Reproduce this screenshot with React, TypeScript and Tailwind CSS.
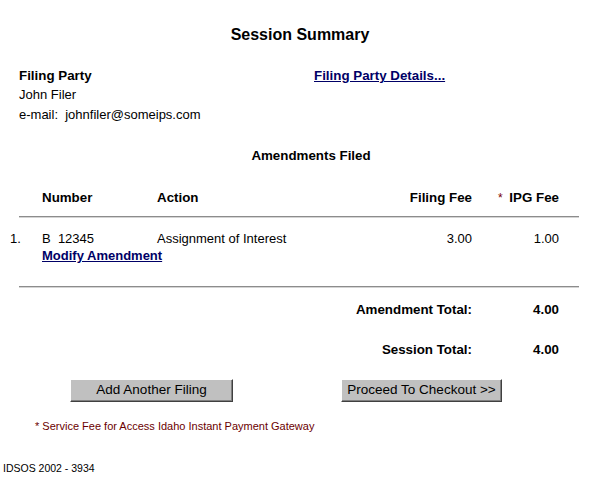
import React from "react";

const fees = [
  { no: "1.", number: "B  12345", action: "Assignment of Interest", filing: "3.00", ipg: "1.00" },
];

const Rule = () => (
  <div className="ml-[19px] mr-[21px] border-t border-b border-t-[#8c8c8c] border-b-[#d4d4d4]" />
);

const OldButton = ({ label, className }: { label: string; className?: string }) => (
  <button
    className={
      "h-[23px] bg-[#c0c0c0] border border-t-white border-l-white border-r-[#404040] border-b-[#404040] shadow-[inset_-1px_-1px_0_#808080] text-[13.5px] text-black leading-none " +
      (className ?? "")
    }
  >
    {label}
  </button>
);

export default function App() {
  return (
    <div className="w-[600px] h-[480px] bg-white text-black font-['Liberation_Sans',Arial,sans-serif] text-[13px] leading-none">
      <h1 className="pt-[27px] text-center text-[16px] font-bold">Session Summary</h1>

      <div className="flex mt-[26px] pl-[19px]">
        <div className="w-[295px] flex flex-col gap-[6px]">
          <div className="text-[13.33px] font-bold">Filing Party</div>
          <div>John Filer</div>
          <div className="mt-[1px]">
            e-mail:&nbsp; johnfiler@someips.com
          </div>
        </div>
        <a href="#" className="text-[13.33px] font-bold text-[#000066] underline h-fit">
          Filing Party Details...
        </a>
      </div>

      <div className="mt-[28px] pl-[22px] text-center text-[13.33px] font-bold">Amendments Filed</div>

      <div className="mt-[28px] flex text-[13.33px] font-bold">
        <div className="w-[42px]" />
        <div className="w-[115px]">Number</div>
        <div className="w-[150px]">Action</div>
        <div className="w-[165px] text-right">Filing Fee</div>
        <div className="w-[87px] text-right">
          <span className="text-[#7a0000] font-normal text-[12px] mr-[3px]">*</span> IPG Fee
        </div>
      </div>

      <div className="mt-[12px]">
        <Rule />
      </div>

      {fees.map((f) => (
        <div key={f.number} className="mt-[14px]">
          <div className="flex">
            <div className="w-[42px] pl-[10px]">{f.no}</div>
            <div className="w-[115px] whitespace-pre">{f.number}</div>
            <div className="w-[150px]">{f.action}</div>
            <div className="w-[165px] text-right">{f.filing}</div>
            <div className="w-[87px] text-right">{f.ipg}</div>
          </div>
          <a href="#" className="block mt-[4px] ml-[42px] w-fit font-bold text-[#000066] underline">
            Modify Amendment
          </a>
        </div>
      ))}

      <div className="mt-[24px]">
        <Rule />
      </div>

      <div className="mt-[15px] flex flex-col gap-[27px] text-[13.33px] font-bold">
        <div className="flex">
          <div className="w-[472px] text-right">Amendment Total:</div>
          <div className="w-[87px] text-right">4.00</div>
        </div>
        <div className="flex">
          <div className="w-[472px] text-right">Session Total:</div>
          <div className="w-[87px] text-right">4.00</div>
        </div>
      </div>

      <div className="mt-[22px] flex">
        <OldButton label="Add Another Filing" className="ml-[70px] w-[163px]" />
        <OldButton label="Proceed To Checkout >>" className="ml-[108px] w-[161px]" />
      </div>

      <div className="mt-[19px] pl-[35px] text-[11px] text-[#6b0000]">
        * Service Fee for Access Idaho Instant Payment Gateway
      </div>

      <div className="mt-[31px] pl-[3px] text-[10.5px]">IDSOS 2002 - 3934</div>
    </div>
  );
}
